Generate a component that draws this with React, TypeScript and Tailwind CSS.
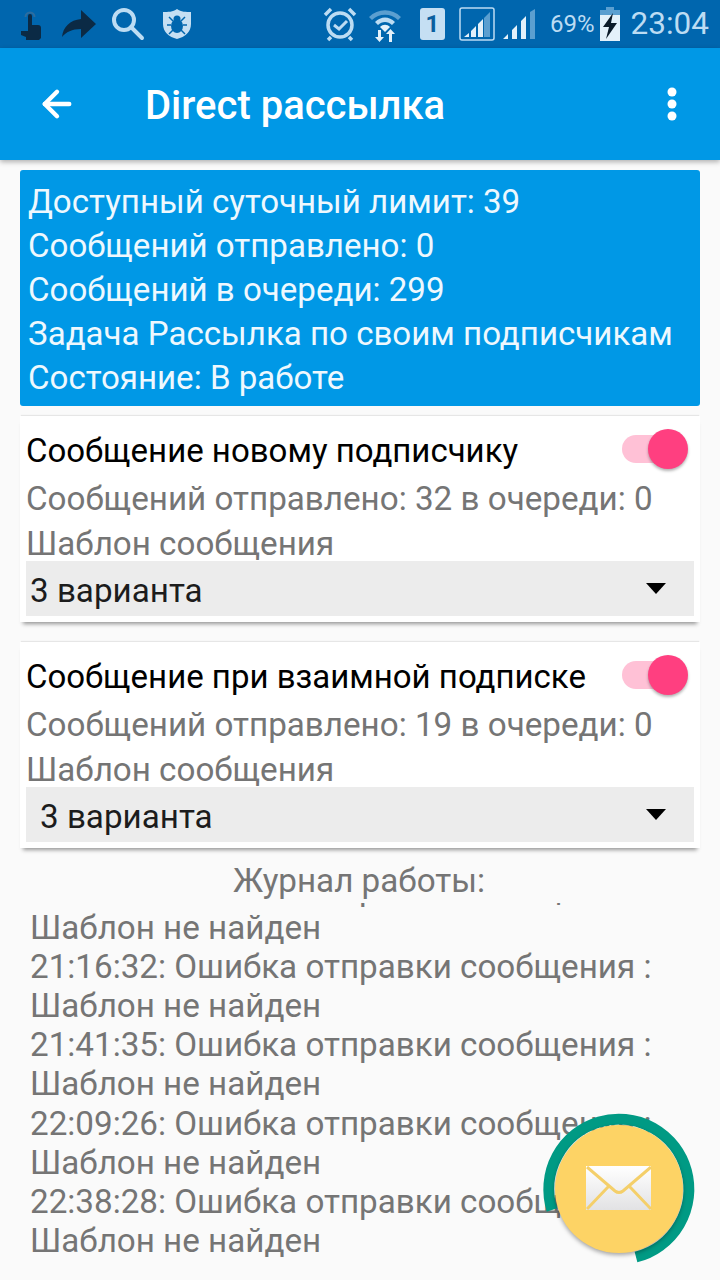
import { ArrowLeft } from 'lucide-react';

const logLines = [
  'Шаблон не найден',
  '21:16:32: Ошибка отправки сообщения :',
  'Шаблон не найден',
  '21:41:35: Ошибка отправки сообщения :',
  'Шаблон не найден',
  '22:09:26: Ошибка отправки сообщения :',
  'Шаблон не найден',
  '22:38:28: Ошибка отправки сообщения :',
  'Шаблон не найден',
];

function StatusBar() {
  return (
    <div className="h-12 bg-[#0066ae] flex items-center shrink-0 relative">
      {/* левые значки */}
      <svg width="22" height="32" viewBox="0 0 22 32" className="ml-[20px] mt-[2px]" fill="#0b2a45">
        <path d="M4.500 8a5.500 5.500 0 1 1 11 0h-2a3.500 3.500 0 1 0-7 0z" fill="#2d6d9f" />
        <path d="M8 7a2 2 0 0 1 4 0v9h6q3 0 3 3v10l-2 2H6v-3l-5-2v-4h7z" />
      </svg>
      <svg width="36" height="30" viewBox="0 0 36 30" className="ml-[19px]" fill="#0b2a45">
        <path d="M20 1l15 14-15 14v-9C11 20 5 23 1 28c1-10 8-17 19-18z" />
      </svg>
      <svg width="34" height="34" viewBox="0 0 34 34" className="ml-[14px]" fill="none" stroke="#bcdcf3" strokeWidth="4">
        <circle cx="13" cy="13" r="10" />
        <path d="M20 20l11 11" strokeLinecap="round" />
      </svg>
      <svg width="30" height="32" viewBox="0 0 30 32" className="ml-[17px]">
        <path d="M15 1c4 3 9 3 14 3v12c0 8-6 13-14 15C7 29 1 24 1 16V4c5 0 10 0 14-3z" fill="#c5dff3" />
        <ellipse cx="15" cy="18" rx="6" ry="7" fill="#0066ae" />
        <circle cx="15" cy="11" r="3.500" fill="#0066ae" />
        <path d="M7 9l4 4M23 9l-4 4M5 17h4M25 17h-4M7 26l4-4M23 26l-4-4" stroke="#0066ae" strokeWidth="1.500" />
      </svg>
      <svg width="34" height="36" viewBox="0 0 34 36" className="ml-[131px]" fill="none" stroke="#bcdcf3">
        <circle cx="17" cy="19" r="12" strokeWidth="3.500" />
        <path d="M11 19l5 4 8-8" strokeWidth="3" />
        <path d="M2 9l6-6M32 9l-6-6M8 31l-3 3M26 31l3 3" strokeWidth="3.500" />
      </svg>
      {/* правые значки */}
      <svg width="34" height="36" viewBox="0 0 34 36" className="ml-[11px]">
        <path d="M1 11c9-9 23-9 32 0l-3 3c-7-7-19-7-26 0z" fill="#5b9fd0" />
        <path d="M7 16c6-6 14-6 20 0l-3 3c-4-4-10-4-14 0z" fill="#bcdcf3" />
        <path d="M12 21c3-3 7-3 10 0l-5 5z" fill="#e4f1fa" />
        <path d="M10 24v7H7l4.500 5 4.500-5h-3v-7zM21 36v-8h-3l4.500-5 4.500 5h-3v8z" fill="#e4f1fa" />
      </svg>
      <div className="ml-[18px] w-[25px] h-[32px] bg-[#c5dff3] rounded-[3px] flex items-center justify-center font-['Roboto',sans-serif] font-bold text-[24px] leading-none text-[#0a5f9f]">
        1
      </div>
      <svg width="36" height="34" viewBox="0 0 36 34" className="ml-[14px]">
        <rect x="1" y="1" width="34" height="32" rx="2" fill="none" stroke="#bcdcf3" strokeWidth="1.500" />
        <path d="M31 5v25H25V11z" fill="#5b9fd0" />
        <path d="M5 30l5-4v4zM12 30v-6l5-5v11zM19 30V17l5-5v18z" fill="#e4f1fa" />
      </svg>
      <svg width="34" height="32" viewBox="0 0 34 32" className="ml-[7px]">
        <path d="M1 31l5-5v5zM10 31V22l5-5v14zM19 31V13l5-5v23z" fill="#e4f1fa" />
        <path d="M28 31V4l5-3v30z" fill="#5b9fd0" />
      </svg>
      <span className="ml-[14px] font-['Roboto',sans-serif] text-[24px] leading-none text-[#bcdcf3]">69%</span>
      <svg width="22" height="34" viewBox="0 0 22 34" className="ml-[4px]">
        <path d="M7 0h8v3h6v5H1V3h6z" fill="#5b9fd0" />
        <path d="M1 8h20v26H1z" fill="#e4f1fa" />
        <path d="M14 6L4 20h6l-3 12 11-16h-6z" fill="#0b1a28" />
      </svg>
      <span className="ml-[10px] font-['Roboto',sans-serif] text-[31.500px] leading-none text-[#bcdcf3]">23:04</span>
    </div>
  );
}

function MessageCard({ title, sent, spinnerClass }: { title: string; sent: number; spinnerClass: string }) {
  return (
    <div className="mx-5 h-[206px] bg-white shadow-[0_5px_4px_-3px_rgba(0,0,0,0.4),0_-2px_1px_-1px_rgba(0,0,0,0.08)] px-[6px] flex flex-col">
      <div className="h-[70px] flex items-center justify-between shrink-0">
        <span className="text-black text-[33px]">{title}</span>
        <div className="relative w-[65px] h-[28px] mb-1 bg-[#ffc1d6] rounded-full mr-[7px]">
          <div className="absolute -right-[1px] top-[-6px] w-10 h-10 rounded-full bg-[#ff3f80] shadow-[0_2px_3px_rgba(0,0,0,0.3)]" />
        </div>
      </div>
      <div className="h-[44px] -mt-[9px] shrink-0 flex items-center text-[#757575]">Сообщений отправлено: {sent} в очереди: 0</div>
      <div className="h-[44px] shrink-0 flex items-center text-[#757575] mt-[1px]">Шаблон сообщения</div>
      <div className={`h-[55px] shrink-0 -mt-[5px] bg-[#ececec] flex items-center justify-between text-[#1c1c1c] ${spinnerClass}`}>
        <span className="mt-[5px]">3 варианта</span>
        <svg width="20" height="11" viewBox="0 0 20 11" className="mr-[28px]">
          <path d="M0 0h20L10 11z" fill="#000" />
        </svg>
      </div>
    </div>
  );
}

export default function App() {
  return (
    <div className="w-[720px] h-[1280px] overflow-hidden relative bg-[#fafafa] flex flex-col font-['Roboto',sans-serif] text-[33.200px] leading-[44px]">
      <StatusBar />

      <header className="h-[112px] bg-[#0098e6] flex items-center shrink-0 shadow-[0_2px_5px_rgba(0,0,0,0.3)] text-white z-10">
        <ArrowLeft size={42} strokeWidth={2.500} className="ml-[36px]" />
        <h1 className="ml-[67px] text-[40px] font-medium mt-[3px]">Direct рассылка</h1>
        <svg width="12" height="34" viewBox="0 0 12 34" className="ml-auto mr-[42px]" fill="#fff">
          <circle cx="6" cy="5" r="4.500" />
          <circle cx="6" cy="17" r="4.500" />
          <circle cx="6" cy="29" r="4.500" />
        </svg>
      </header>

      <div className="mx-5 mt-[10px] h-[236px] bg-[#0098e6] rounded-[3px] px-2 py-[10px] text-[#eef8fe] text-[33.100px]">
        <p>Доступный суточный лимит: 39</p>
        <p>Сообщений отправлено: 0</p>
        <p>Сообщений в очереди: 299</p>
        <p>Задача Рассылка по своим подписчикам</p>
        <p>Состояние: В работе</p>
      </div>

      <div className="mt-[10px] flex flex-col gap-5">
        <MessageCard title="Сообщение новому подписчику" sent={32} spinnerClass="pl-1" />
        <MessageCard title="Сообщение при взаимной подписке" sent={19} spinnerClass="pl-[14px]" />
      </div>

      <div className="text-center text-[#757575] mt-[11px] h-[44px] mr-[2px] shrink-0">Журнал работы:</div>

      {/* журнал прокручен, от верхней строки видны только хвосты букв */}
      <div className="h-[360px] overflow-hidden pl-[30px] text-[#757575] leading-[39.100px]">
        <div className="-mt-[34px]">
          <p className="whitespace-nowrap">20:47:31: Ошибка отправки сообщения :</p>
          {logLines.map((line, i) => (
            <p key={i} className="whitespace-nowrap">{line}</p>
          ))}
        </div>
      </div>

      <svg width="160" height="160" viewBox="0 0 160 160" className="absolute left-[539px] top-[1109px]">
        <path d="M97 148A70 70 0 1 0 13 101" fill="none" stroke="#009a84" strokeWidth="11" />
      </svg>
      <div className="absolute left-[555px] top-[1125px] w-32 h-32 rounded-full bg-[#fdd365] shadow-[0_2px_4px_rgba(0,0,0,0.35)] flex items-center justify-center">
        <svg width="66" height="46" viewBox="0 0 66 46">
          <defs>
            <linearGradient id="env" x1="0" y1="0" x2="0" y2="1">
              <stop offset="0" stopColor="#ffffff" />
              <stop offset="1" stopColor="#e2e2e4" />
            </linearGradient>
          </defs>
          <rect x="0" y="0" width="65" height="44" fill="url(#env)" />
          <path d="M1 1l28 24q4 3 8 0L65 1M1 43l21-22M65 43L44 21" fill="none" stroke="#f4cf6a" strokeWidth="3" />
        </svg>
      </div>
    </div>
  );
}
